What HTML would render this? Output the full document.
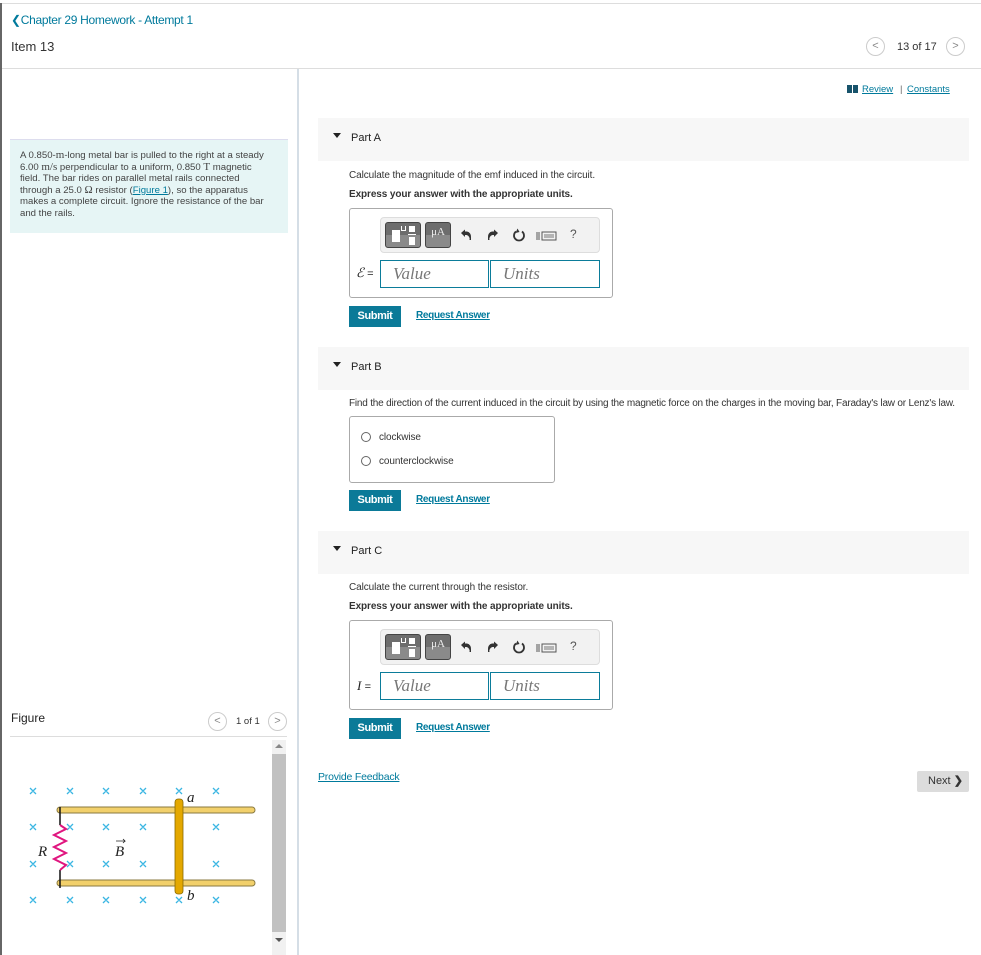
<!DOCTYPE html>
<html><head><meta charset="utf-8"><style>
*{margin:0;padding:0;box-sizing:border-box}
body{width:981px;height:955px;position:relative;overflow:hidden;background:#fff;font-family:"Liberation Sans",Arial,sans-serif;color:#333}
.a{position:absolute;white-space:nowrap}
.lnk{color:#007a9c;text-decoration:underline}
.ph{position:absolute;left:318px;width:651px;height:43px;background:#f7f7f7}
.ph .t{position:absolute;left:15px;top:15px;width:0;height:0;border-left:4px solid transparent;border-right:4px solid transparent;border-top:5px solid #222}
.ph .l{position:absolute;left:33px;top:14px;font-size:11px;color:#222}
.sm{font-size:10px;color:#333;letter-spacing:-0.1px}
.bx{position:absolute;border:1px solid #aaa;border-radius:3px;background:#fff}
.tb{position:absolute;background:#f2f2f2;border:1px solid #ddd;border-radius:4px;width:220px;height:36px}
.db{position:absolute;top:4px;height:26px;border-radius:3px;background:linear-gradient(#6d6d6d 0,#6d6d6d 50%,#8a8a8a 50%);border:1px solid #444}
.inp{position:absolute;height:28px;border:1px solid #0b7c9a;font-family:"Liberation Serif",serif;font-style:italic;font-size:17px;color:#777;padding:3px 0 0 12px}
.sub{position:absolute;left:349px;width:52px;height:21px;background:#0b7a98;color:#fff;font-size:11px;font-weight:bold;text-align:center;line-height:21px;letter-spacing:-0.4px}
.ra{position:absolute;left:416px;font-size:10px;font-weight:bold;letter-spacing:-0.3px}
.circ{position:absolute;width:19px;height:19px;border:1px solid #ccc;border-radius:50%;color:#888;font-size:11px;text-align:center;line-height:17px}
.rad{position:absolute;left:361px;width:10px;height:10px;border:1px solid #666;border-radius:50%}
</style></head><body>
<div class="a" style="left:0;top:3px;width:981px;height:1px;background:#ddd"></div>
<div class="a" style="left:0;top:3px;width:2px;height:952px;background:#666"></div>
<div class="a" style="left:11px;top:13px;font-size:12px;color:#007a9c;letter-spacing:-0.3px">&#10094;Chapter 29 Homework - Attempt 1</div>
<div class="a" style="left:11px;top:39px;font-size:13px;color:#333">Item 13</div>
<div class="circ" style="left:866px;top:37px">&lt;</div>
<div class="a" style="left:897px;top:41px;font-size:11px;color:#333">13 of 17</div>
<div class="circ" style="left:946px;top:37px">&gt;</div>
<div class="a" style="left:2px;top:68px;width:979px;height:1px;background:#ddd"></div>
<div class="a" style="left:297px;top:69px;width:2px;height:886px;background:#d5dee6"></div>

<div class="a" style="left:10px;top:139px;width:278px;height:94px;background:#e6f5f5;border-top:1px solid #dde"></div>
<div class="a" style="left:20px;top:150px;font-size:9.6px;line-height:11.6px;color:#444;white-space:normal;width:252px">A 0.850-<span style="font-family:'Liberation Serif';font-size:11px">m</span>-long metal bar is pulled to the right at a steady 6.00 <span style="font-family:'Liberation Serif';font-size:11px">m/s</span> perpendicular to a uniform, 0.850 <span style="font-family:'Liberation Serif';font-size:11px">T</span> magnetic field. The bar rides on parallel metal rails connected through a 25.0 <span style="font-family:'Liberation Serif';font-size:11px">Ω</span> resistor (<span class="lnk">Figure 1</span>), so the apparatus makes a complete circuit. Ignore the resistance of the bar and the rails.</div>

<div class="a" style="left:11px;top:711px;font-size:12px;color:#222">Figure</div>
<div class="circ" style="left:208px;top:712px">&lt;</div>
<div class="a" style="left:236px;top:716px;font-size:9.5px">1 of 1</div>
<div class="circ" style="left:268px;top:712px">&gt;</div>
<div class="a" style="left:10px;top:736px;width:277px;height:1px;background:#ddd"></div>
<div class="a" style="left:272px;top:740px;width:14px;height:215px;background:#f1f1f1"></div>
<div class="a" style="left:272px;top:754px;width:14px;height:178px;background:#c1c1c1"></div>
<div class="a" style="left:275px;top:744px;border-left:4px solid transparent;border-right:4px solid transparent;border-bottom:4px solid #888"></div>
<div class="a" style="left:275px;top:938px;border-left:4px solid transparent;border-right:4px solid transparent;border-top:4px solid #555"></div>
<svg class="a" style="left:0;top:740px" width="270" height="215" viewBox="0 740 270 215">
<g stroke="#3ab6e3" stroke-width="1.3">
<path d="M30 788l6 6M36 788l-6 6M67 788l6 6M73 788l-6 6M103 788l6 6M109 788l-6 6M140 788l6 6M146 788l-6 6M176 788l6 6M182 788l-6 6M213 788l6 6M219 788l-6 6"/>
<path d="M30 824l6 6M36 824l-6 6M67 824l6 6M73 824l-6 6M103 824l6 6M109 824l-6 6M140 824l6 6M146 824l-6 6M213 824l6 6M219 824l-6 6"/>
<path d="M30 861l6 6M36 861l-6 6M67 861l6 6M73 861l-6 6M103 861l6 6M109 861l-6 6M140 861l6 6M146 861l-6 6M213 861l6 6M219 861l-6 6"/>
<path d="M30 897l6 6M36 897l-6 6M67 897l6 6M73 897l-6 6M103 897l6 6M109 897l-6 6M140 897l6 6M146 897l-6 6M176 897l6 6M182 897l-6 6M213 897l6 6M219 897l-6 6"/>
</g>
<path d="M60 810H252M60 883H252" stroke="#8a7a40" stroke-width="7" stroke-linecap="round"/>
<path d="M60 810H252M60 883H252" stroke="#f2d06b" stroke-width="5" stroke-linecap="round"/>
<path d="M60 807V825M60 870V888" stroke="#111" stroke-width="1.5"/>
<path d="M60 825l6 4-12 6 12 6-12 6 12 6-12 6 12 6-6 5" fill="none" stroke="#e0157f" stroke-width="2"/>
<rect x="175" y="799" width="8" height="95" rx="3" fill="#e4a800" stroke="#8a6a00" stroke-width="0.8"/>
<text x="38" y="856" font-family="Liberation Serif" font-style="italic" font-size="15" fill="#222">R</text>
<text x="115" y="856" font-family="Liberation Serif" font-style="italic" font-size="15" fill="#222">B</text>
<path d="M116 841h9l-2-2m2 2l-2 2" stroke="#222" fill="none" stroke-width="0.8"/>
<text x="187" y="802" font-family="Liberation Serif" font-style="italic" font-size="15" fill="#222">a</text>
<text x="187" y="900" font-family="Liberation Serif" font-style="italic" font-size="15" fill="#222">b</text>
</svg>

<svg class="a" style="left:847px;top:84px" width="12" height="10"><rect x="0" y="1" width="5" height="8" fill="#17536b"/><rect x="6" y="1" width="5" height="8" fill="#17536b"/></svg>
<div class="a lnk" style="left:862px;top:84px;font-size:9.5px">Review</div>
<div class="a" style="left:900px;top:84px;font-size:9.5px;color:#666">|</div>
<div class="a lnk" style="left:907px;top:84px;font-size:9.5px">Constants</div>

<div class="ph" style="top:118px"><div class="t"></div><div class="l">Part A</div></div>
<div class="a sm" style="left:349px;top:170px">Calculate the magnitude of the emf induced in the circuit.</div>
<div class="a sm" style="left:349px;top:189px;font-weight:bold">Express your answer with the appropriate units.</div>
<div class="bx" style="left:349px;top:208px;width:264px;height:90px"></div>
<div class="tb" style="left:380px;top:217px">
 <div class="db" style="left:4px;width:36px"><div style="position:absolute;left:6px;top:7px;width:8px;height:12px;background:#fff"></div><div style="position:absolute;left:15px;top:3px;width:5px;height:5px;border:1px solid #fff;border-top:none"></div><div style="position:absolute;left:23px;top:3px;width:6px;height:6px;background:#fff"></div><div style="position:absolute;left:22px;top:11px;width:8px;height:1px;background:#fff"></div><div style="position:absolute;left:23px;top:14px;width:6px;height:8px;background:#fff"></div></div>
 <div class="db" style="left:44px;width:26px;color:#eee;font-family:'Liberation Serif';font-size:11px;text-align:center;padding-top:3px">μA</div>
 <svg class="a" style="left:79px;top:10px" width="14" height="14"><path d="M1 5L5 1.5V3.5H7A5 5 0 0 1 11 9V12L9.5 12A4 4 0 0 0 6.5 7H5V9Z" fill="#333"/></svg>
 <svg class="a" style="left:105px;top:10px" width="14" height="14"><path d="M12 5L8 1.5V3.5H6A5 5 0 0 0 2 9V12L3.5 12A4 4 0 0 1 6.5 7H8V9Z" fill="#333"/></svg>
 <svg class="a" style="left:131px;top:9px" width="14" height="16"><path d="M10 4.5A5 5 0 1 1 4 4.5" fill="none" stroke="#333" stroke-width="1.8"/><path d="M5.5 1.5L7.5 5 3.5 6Z" fill="#333"/></svg>
 <svg class="a" style="left:155px;top:12px" width="22" height="12"><path d="M1 2v8M3 2v8" stroke="#555"/><rect x="6" y="2" width="14" height="8" fill="none" stroke="#555"/><path d="M8 5h10M8 7h10" stroke="#777"/></svg>
 <div class="a" style="left:189px;top:9px;font-size:12px;color:#555">?</div>
</div>
<div class="a" style="left:356px;top:265px;font-family:'Liberation Serif';font-style:italic;font-size:13px;color:#222">ℰ <span style="font-style:normal;font-size:11px;font-family:'Liberation Sans'">=</span></div>
<div class="inp" style="left:380px;top:260px;width:109px">Value</div>
<div class="inp" style="left:490px;top:260px;width:110px">Units</div>
<div class="sub" style="top:306px">Submit</div>
<div class="a lnk ra" style="top:310px">Request Answer</div>

<div class="ph" style="top:347px"><div class="t"></div><div class="l">Part B</div></div>
<div class="a sm" style="left:349px;top:398px;letter-spacing:-0.2px">Find the direction of the current induced in the circuit by using the magnetic force on the charges in the moving bar, Faraday's law or Lenz's law.</div>
<div class="bx" style="left:349px;top:416px;width:206px;height:67px"></div>
<div class="rad" style="top:432px"></div><div class="a sm" style="left:379px;top:432px">clockwise</div>
<div class="rad" style="top:456px"></div><div class="a sm" style="left:379px;top:456px">counterclockwise</div>
<div class="sub" style="top:490px">Submit</div>
<div class="a lnk ra" style="top:494px">Request Answer</div>

<div class="ph" style="top:531px"><div class="t"></div><div class="l">Part C</div></div>
<div class="a sm" style="left:349px;top:582px">Calculate the current through the resistor.</div>
<div class="a sm" style="left:349px;top:601px;font-weight:bold">Express your answer with the appropriate units.</div>
<div class="bx" style="left:349px;top:620px;width:264px;height:90px"></div>
<div class="tb" style="left:380px;top:629px">
 <div class="db" style="left:4px;width:36px"><div style="position:absolute;left:6px;top:7px;width:8px;height:12px;background:#fff"></div><div style="position:absolute;left:15px;top:3px;width:5px;height:5px;border:1px solid #fff;border-top:none"></div><div style="position:absolute;left:23px;top:3px;width:6px;height:6px;background:#fff"></div><div style="position:absolute;left:22px;top:11px;width:8px;height:1px;background:#fff"></div><div style="position:absolute;left:23px;top:14px;width:6px;height:8px;background:#fff"></div></div>
 <div class="db" style="left:44px;width:26px;color:#eee;font-family:'Liberation Serif';font-size:11px;text-align:center;padding-top:3px">μA</div>
 <svg class="a" style="left:79px;top:10px" width="14" height="14"><path d="M1 5L5 1.5V3.5H7A5 5 0 0 1 11 9V12L9.5 12A4 4 0 0 0 6.5 7H5V9Z" fill="#333"/></svg>
 <svg class="a" style="left:105px;top:10px" width="14" height="14"><path d="M12 5L8 1.5V3.5H6A5 5 0 0 0 2 9V12L3.5 12A4 4 0 0 1 6.5 7H8V9Z" fill="#333"/></svg>
 <svg class="a" style="left:131px;top:9px" width="14" height="16"><path d="M10 4.5A5 5 0 1 1 4 4.5" fill="none" stroke="#333" stroke-width="1.8"/><path d="M5.5 1.5L7.5 5 3.5 6Z" fill="#333"/></svg>
 <svg class="a" style="left:155px;top:12px" width="22" height="12"><path d="M1 2v8M3 2v8" stroke="#555"/><rect x="6" y="2" width="14" height="8" fill="none" stroke="#555"/><path d="M8 5h10M8 7h10" stroke="#777"/></svg>
 <div class="a" style="left:189px;top:9px;font-size:12px;color:#555">?</div>
</div>
<div class="a" style="left:357px;top:678px;font-family:'Liberation Serif';font-style:italic;font-size:13px;color:#222">I <span style="font-style:normal;font-size:11px;font-family:'Liberation Sans'">=</span></div>
<div class="inp" style="left:380px;top:672px;width:109px">Value</div>
<div class="inp" style="left:490px;top:672px;width:110px">Units</div>
<div class="sub" style="top:718px">Submit</div>
<div class="a lnk ra" style="top:722px">Request Answer</div>

<div class="a lnk" style="left:318px;top:771px;font-size:10.5px;letter-spacing:-0.2px">Provide Feedback</div>
<div class="a" style="left:917px;top:771px;width:52px;height:21px;background:#dcdcdc;border-radius:2px;font-size:11px;color:#333;line-height:21px;padding-left:11px">Next <b>&#10095;</b></div>
</body></html>
